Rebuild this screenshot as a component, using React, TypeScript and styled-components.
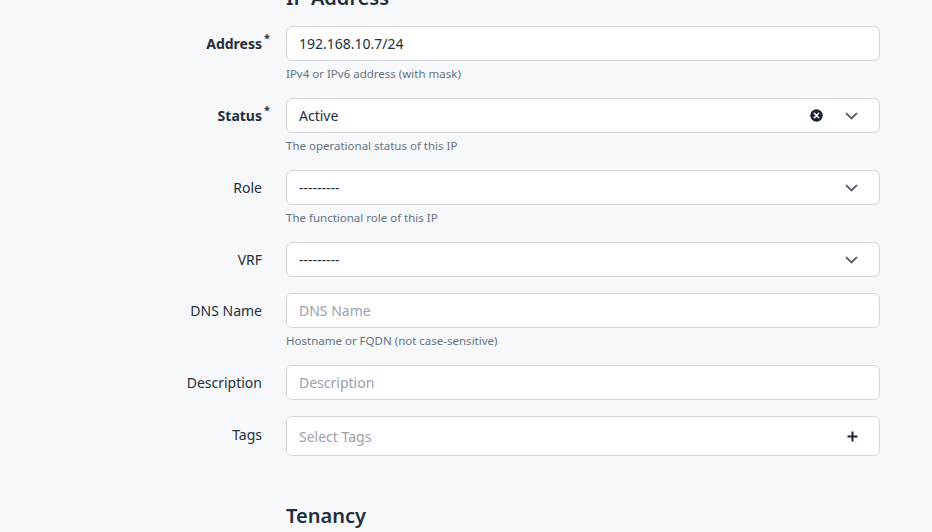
import React from "react";
import styled, { createGlobalStyle } from "styled-components";

const GlobalStyle = createGlobalStyle`
  html, body {
    margin: 0;
    padding: 0;
    background: #f7f8fa;
    overflow: hidden;
  }
  body {
    font-family: "Noto Sans", "Open Sans", sans-serif;
    color: #232e3c;
  }
`;

const Page = styled.div`
  width: 932px;
  height: 532px;
  overflow: hidden;
`;

// the page is scrolled so the section title is partly out of view
const Content = styled.div`
  margin-top: -14px;
`;

const Section = styled.div`
  display: grid;
  grid-template-columns: 262px 1fr;
  column-gap: 24px;
  padding-right: 52px;
`;

const SectionTitle = styled.h2`
  grid-column: 2;
  margin: 0 0 16px;
  font-size: 20px;
  font-weight: 600;
  line-height: 24px;
  color: #232e3c;
`;

const TenancyTitle = styled(SectionTitle)`
  margin-top: 32px;
`;

const Row = styled.div`
  display: contents;
`;

const Label = styled.label<{ $required?: boolean }>`
  grid-column: 1;
  text-align: right;
  font-size: 14px;
  line-height: 35px;
  font-weight: ${({ $required }) => ($required ? 700 : 400)};
  color: #232e3c;
  position: relative;
`;

const TallLabel = styled(Label)`
  line-height: 38px;
`;

const Star = styled.span`
  position: absolute;
  top: -6px;
  left: calc(100% + 2px);
  font-size: 11px;
  font-weight: 700;
`;

const Field = styled.div`
  grid-column: 2;
  margin-bottom: 16px;
`;

const Box = styled.div<{ $tall?: boolean }>`
  box-sizing: border-box;
  height: ${({ $tall }) => ($tall ? "40px" : "35px")};
  background: #fff;
  border: 1px solid #d0d5dc;
  border-radius: 6px;
  display: flex;
  align-items: center;
  padding: 0 12px;
  font-size: 14px;
`;

const Value = styled.span<{ $placeholder?: boolean }>`
  flex: 1;
  color: ${({ $placeholder }) => ($placeholder ? "#9aa0ac" : "#232e3c")};
`;

const Icons = styled.span`
  display: flex;
  align-items: center;
  gap: 22px;
  margin-right: 9px;
`;

const Help = styled.div`
  margin-top: 4px;
  font-size: 11.5px;
  line-height: 17px;
  color: #667382;
`;

const Clear = () => (
  <svg width="13" height="13" viewBox="0 0 13 13">
    <circle cx="6.5" cy="6.5" r="6.2" fill="#1d2532" />
    <path d="M4.3 4.3l4.4 4.4M8.7 4.3l-4.4 4.4" stroke="#fff" strokeWidth="1.6" strokeLinecap="round" />
  </svg>
);

const Chevron = () => (
  <svg width="13" height="8" viewBox="0 0 13 8">
    <path d="M1.5 1.5l5 5 5-5" fill="none" stroke="#5d6571" strokeWidth="1.8" strokeLinecap="round" strokeLinejoin="round" />
  </svg>
);

const Plus = () => (
  <svg width="11" height="11" viewBox="0 0 11 11">
    <path d="M5.5 0.5v10M0.5 5.5h10" stroke="#1d2532" strokeWidth="2" />
  </svg>
);

export default function App() {
  return (
    <Page>
      <GlobalStyle />
      <Content>
        <Section>
          <SectionTitle>IP Address</SectionTitle>

          <Row>
            <Label $required>
              Address<Star>*</Star>
            </Label>
            <Field>
              <Box>
                <Value>192.168.10.7/24</Value>
              </Box>
              <Help>IPv4 or IPv6 address (with mask)</Help>
            </Field>
          </Row>

          <Row>
            <Label $required>
              Status<Star>*</Star>
            </Label>
            <Field>
              <Box>
                <Value>Active</Value>
                <Icons>
                  <Clear />
                  <Chevron />
                </Icons>
              </Box>
              <Help>The operational status of this IP</Help>
            </Field>
          </Row>

          <Row>
            <Label>Role</Label>
            <Field>
              <Box>
                <Value>---------</Value>
                <Icons>
                  <Chevron />
                </Icons>
              </Box>
              <Help>The functional role of this IP</Help>
            </Field>
          </Row>

          <Row>
            <Label>VRF</Label>
            <Field>
              <Box>
                <Value>---------</Value>
                <Icons>
                  <Chevron />
                </Icons>
              </Box>
            </Field>
          </Row>

          <Row>
            <Label>DNS Name</Label>
            <Field>
              <Box>
                <Value $placeholder>DNS Name</Value>
              </Box>
              <Help>Hostname or FQDN (not case-sensitive)</Help>
            </Field>
          </Row>

          <Row>
            <Label>Description</Label>
            <Field>
              <Box>
                <Value $placeholder>Description</Value>
              </Box>
            </Field>
          </Row>

          <Row>
            <TallLabel>Tags</TallLabel>
            <Field>
              <Box $tall>
                <Value $placeholder>Select Tags</Value>
                <Icons>
                  <Plus />
                </Icons>
              </Box>
            </Field>
          </Row>

          <TenancyTitle>Tenancy</TenancyTitle>
        </Section>
      </Content>
    </Page>
  );
}
